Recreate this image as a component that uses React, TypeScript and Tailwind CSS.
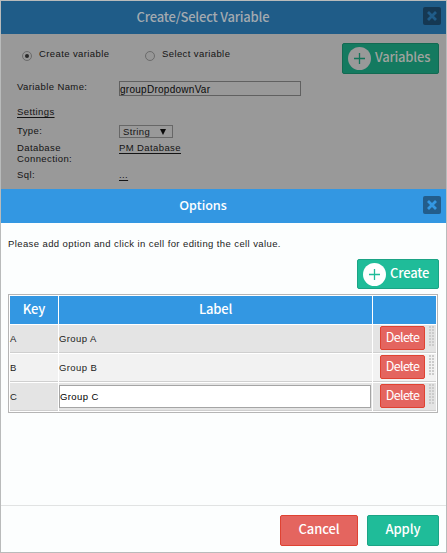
import React from "react";

const SANS = "font-['Liberation_Sans',sans-serif]";
const HUM = "font-['Noto_Sans_CJK_SC','Open_Sans',sans-serif]";

function Close({ dim }: { dim?: boolean }) {
  return (
    <button
      className={`flex h-[18px] w-[18px] items-center justify-center rounded-[2px] ${
        dim ? "bg-[#153853]" : "bg-[#235d8b]"
      }`}
    >
      <svg width="10" height="10" viewBox="0 0 10 10" fill="none" stroke={dim ? "#205c89" : "#3498e3"} strokeWidth="2.8">
        <path d="M1 1L9 9M9 1L1 9" />
      </svg>
    </button>
  );
}

function Plus({ dim }: { dim?: boolean }) {
  return (
    <svg width="23" height="23" viewBox="0 0 23 23" fill="none">
      <circle cx="11.5" cy="11.5" r="11.5" fill={dim ? "#999999" : "#ffffff"} />
      <path d="M6 11.5H17M11.5 6V17" stroke={dim ? "#137359" : "#1fbc99"} strokeWidth="1.3" />
    </svg>
  );
}

function Grip() {
  return (
    <svg width="5" height="20" viewBox="0 0 5 20" fill="#cbcbcb" shapeRendering="crispEdges">
      {[0, 3, 6, 9, 12, 15, 18].map((y) => (
        <g key={y}>
          <rect x="0" y={y} width="2" height="2" />
          <rect x="3" y={y} width="2" height="2" />
        </g>
      ))}
    </svg>
  );
}

function Radio({ on }: { on?: boolean }) {
  return (
    <span className="flex h-[10px] w-[10px] items-center justify-center rounded-full border border-[#6b6b6b] bg-[#979797]">
      {on && <span className="h-1 w-1 rounded-full bg-[#282828]" />}
    </span>
  );
}

const rows = [
  { k: "A", label: "Group A", bg: "bg-[#e4e4e4]" },
  { k: "B", label: "Group B", bg: "bg-[#f2f2f2]" },
  { k: "C", label: "Group C", bg: "bg-[#e4e4e4]", edit: true },
];

export default function App() {
  return (
    <div className={`flex h-[553px] w-[447px] flex-col border border-[#b9bbbb] bg-[#fcfefe] text-[9.5px] leading-[11px] text-[#222] ${SANS}`}>
      <section className="h-[188px] bg-[#999999] tracking-[0.4px] text-[#141414]">
        <header className="flex h-[33px] items-center bg-[#1f5c88] pr-[5px]">
          <h1 className={`-mt-px flex-1 pr-[18px] text-center text-[13px] leading-[20px] font-medium tracking-[-0.2px] text-[#a3aab0] ${HUM}`}>Create/Select Variable</h1>
          <div className="-mt-[3px] flex justify-end"><Close dim /></div>
        </header>
        <div className="flex h-[47px] items-start pr-[7px] pl-[21px]">
          <div className="flex w-[123px] pt-[14px]">
            <div className="pt-[3px]"><Radio on /></div>
            <span className="ml-[7px]">Create variable</span>
          </div>
          <div className="flex flex-1 pt-[14px]">
            <div className="pt-[3px]"><Radio /></div>
            <span className="ml-[7px]">Select variable</span>
          </div>
          <button className={`mt-[9px] flex h-[31px] w-[97px] items-center rounded-[2px] border border-[#126a52] bg-[#147a60] pl-[5px] text-[13px] leading-[20px] font-medium tracking-[-0.2px] text-[#a0a39f] ${HUM}`}>
            <Plus dim />
            <span className="-mt-[3px] ml-1">Variables</span>
          </button>
        </div>
        <div className="flex h-[25px] pl-4">
          <span className="w-[102px]">Variable Name:</span>
          <div className="h-[15px] w-[182px] border border-[#606060] pt-px text-[10px] leading-[13px] tracking-[0.27px] text-[#0a0a0a]">groupDropdownVar</div>
        </div>
        <div className="flex h-[19px] pl-4"><span className="underline underline-offset-2">Settings</span></div>
        <div className="flex h-[18px] pl-4">
          <span className="w-[102px]">Type:</span>
          <div className="flex h-[13px] w-[54px] items-center justify-between border border-[#676767] pr-[6px] pl-[3px]">
            <span>String</span>
            <svg width="6" height="6" viewBox="0 0 6 6"><path d="M0 0H6L3 6Z" fill="#0a0a0a" /></svg>
          </div>
        </div>
        <div className="-mt-px flex h-[27px] pl-4">
          <span className="w-[102px]">Database<br />Connection:</span>
          <span className="underline underline-offset-2">PM Database</span>
        </div>
        <div className="flex pl-4">
          <span className="w-[102px]">Sql:</span>
          <span className="underline underline-offset-2">...</span>
        </div>
      </section>

      <header className="flex h-[34px] items-center bg-[#3397e2] pr-[5px]">
        <h2 className="flex-1 pr-[18px] text-center text-[12.5px] leading-[18px] font-semibold text-white font-['Open_Sans',sans-serif]">Options</h2>
        <div className="-mt-[2px] flex justify-end"><Close /></div>
      </header>

      <main className="h-[282px] pt-[15px] pr-2 pl-[7px]">
        <p className="h-[21px] tracking-[0.4px] whitespace-nowrap">Please add option and click in cell for editing the cell value.</p>
        <div className="flex justify-end">
          <button className={`-mr-px flex h-[30px] w-[82px] items-center rounded-[2px] border border-[#1ba485] bg-[#1fbc99] pl-[5px] text-[13px] leading-[20px] font-medium tracking-[-0.2px] text-white ${HUM}`}>
            <Plus />
            <span className="-mt-[3px] ml-1">Create</span>
          </button>
        </div>
        <div className="mt-[5px] grid h-[119px] w-[430px] grid-cols-[48px_313px_63px] gap-px border border-[#b5b5b5] bg-white p-px">
          {["Key", "Label", ""].map((h) => (
            <div key={h} className={`flex h-7 items-center justify-center bg-[#3397e2] pb-[2px] text-[13px] leading-[20px] font-medium tracking-[-0.2px] text-white ${HUM}`}>{h}</div>
          ))}
          {rows.map((r) => (
            <React.Fragment key={r.k}>
              <div className={`flex h-7 items-center border-b border-[#cfcfcf] ${r.bg}`}>{r.k}</div>
              <div className={`flex h-7 items-center border-b border-[#cfcfcf] tracking-[0.4px] ${r.bg}`}>
                {r.edit ? (
                  <div className="flex h-[23px] w-[312px] items-center border border-[#a5a5a5] bg-white text-black">{r.label}</div>
                ) : (
                  r.label
                )}
              </div>
              <div className={`flex h-7 items-start border-b border-[#cfcfcf] pt-px pl-[7px] ${r.bg}`}>
                <button className={`flex h-6 w-[45px] items-center justify-center rounded-[2px] border border-[#df4232] bg-[#e4655f] pb-[2px] text-[12.5px] leading-[18px] tracking-[-0.6px] text-white ${HUM}`}>Delete</button>
                <div className="ml-1"><Grip /></div>
              </div>
            </React.Fragment>
          ))}
        </div>
      </main>

      <footer className={`flex flex-1 justify-end gap-[9px] border-t border-[#e1e3e3] pt-[9px] pr-[7px] text-[13px] leading-[20px] font-medium tracking-[-0.1px] text-white ${HUM}`}>
        <button className="flex h-[31px] w-[78px] items-center justify-center rounded-[2px] border border-[#df4232] bg-[#e4655f] pb-[3px]">Cancel</button>
        <button className="flex h-[31px] w-[72px] items-center justify-center rounded-[2px] border border-[#1ba485] bg-[#1fbc99] pb-[3px]">Apply</button>
      </footer>
    </div>
  );
}
